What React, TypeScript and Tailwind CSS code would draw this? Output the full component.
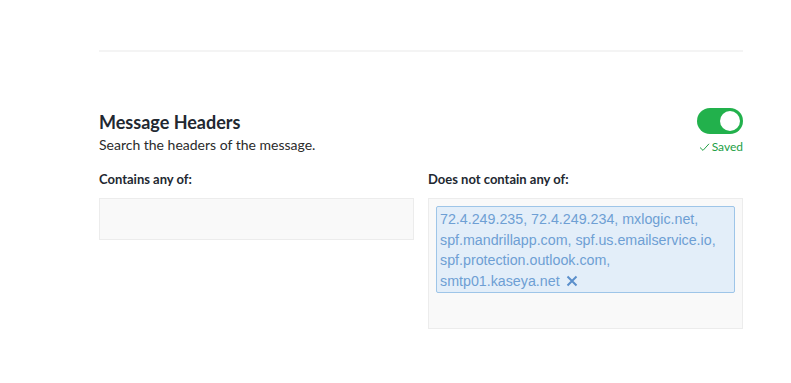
import React from "react";

export default function App() {
  return (
    <div className="w-[791px] h-[383px] bg-white" style={{ fontFamily: "Lato, 'Noto Sans', sans-serif" }}>
      <div className="ml-[99px] w-[644px] pt-[50px]">
        <div className="h-[2px] bg-[#f4f4f4]" />
        <div className="mt-[57px] flex items-start justify-between">
          <div>
            <div className="text-[18px] font-bold text-[#222831] leading-[26px]">Message Headers</div>
            <div className="text-[14px] text-[#2b2b2b] leading-[18px] mt-[1px]">Search the headers of the message.</div>
          </div>
          <div className="flex flex-col items-end">
            <div className="w-[46px] h-[26px] rounded-full bg-[#22b14c] flex items-center justify-end pr-[3px] -mt-[1px]">
              <div className="w-[20px] h-[20px] rounded-full bg-white" />
            </div>
            <div className="flex items-center gap-[2px] mt-[6px] text-[12px] text-[#22a045] leading-[14px]">
              <svg width="11" height="10" viewBox="0 0 11 10" fill="none">
                <path d="M1 5.5 L4 8.4 L10 1.8" stroke="#22a045" strokeWidth="1" />
              </svg>
              <span>Saved</span>
            </div>
          </div>
        </div>
        <div className="mt-[16px] flex justify-between">
          <div className="w-[315px]">
            <div className="text-[13px] font-bold text-[#222831] leading-[18px]">Contains any of:</div>
            <div className="mt-[10px] h-[42px] bg-[#f9f9f9] border border-[#ececec]" />
          </div>
          <div className="w-[315px]">
            <div className="text-[13px] font-bold text-[#222831] leading-[18px]">Does not contain any of:</div>
            <div className="mt-[10px] h-[131px] bg-[#f9f9f9] border border-[#ececec] p-[7px]">
              <div
                className="bg-[#e3eef9] border border-[#9ec5e8] rounded-[2px] px-[3px] pt-[2px] pb-[1px] text-[14.25px] leading-[20.5px] text-[#6e9fd4]"
                style={{ fontFamily: "'Liberation Sans', Arial, sans-serif" }}
              >
                72.4.249.235, 72.4.249.234, mxlogic.net,
                <br />
                spf.mandrillapp.com, spf.us.emailservice.io,
                <br />
                spf.protection.outlook.com,
                <br />
                smtp01.kaseya.net{" "}
                <svg className="inline-block align-[-1px] ml-[2px]" width="12" height="12" viewBox="0 0 12 12">
                  <path d="M1.5 1.5 L10.5 10.5 M10.5 1.5 L1.5 10.5" stroke="#5b8fcb" strokeWidth="2" />
                </svg>
              </div>
            </div>
          </div>
        </div>
      </div>
    </div>
  );
}
